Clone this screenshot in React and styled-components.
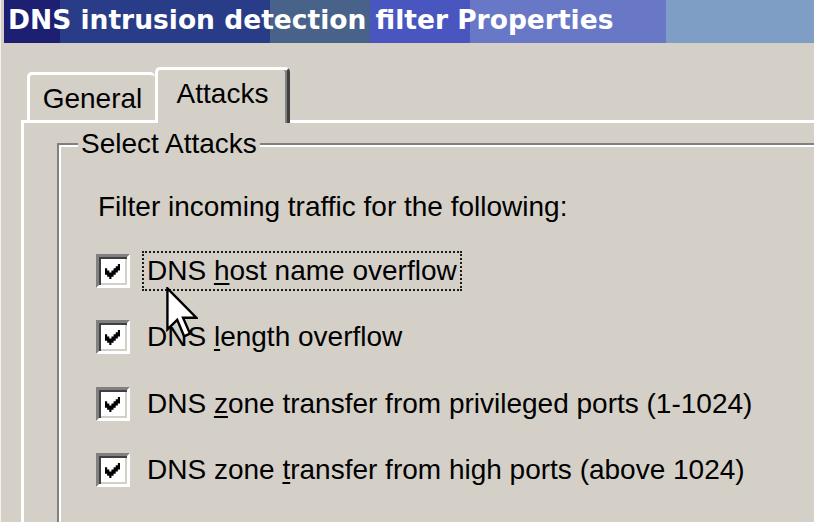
import React from "react";
import styled, { createGlobalStyle } from "styled-components";

const GlobalStyle = createGlobalStyle`
  html, body {
    margin: 0;
    padding: 0;
    background: #d4d0c8;
    overflow: hidden;
  }
  #root {
    width: 814px;
    height: 522px;
  }
`;

const Window = styled.div`
  position: relative;
  box-sizing: border-box;
  width: 814px;
  height: 522px;
  overflow: hidden;
  padding-left: 3px;
  border-left: 1px solid #f2f1ec;
  background: #d4d0c8;
  font-family: "Liberation Sans", Arial, sans-serif;
  color: #000;
`;

/* banded like a 256 colour capture of the win2k caption gradient */
const TitleBar = styled.div`
  height: 43px;
  line-height: 40px;
  padding-left: 4px;
  white-space: nowrap;
  font-family: "DejaVu Sans", Verdana, sans-serif;
  font-weight: bold;
  font-size: 26.5px;
  color: #fff;
  background: linear-gradient(
    90deg,
    #1c1f72 0,
    #1c1f72 56px,
    #283c88 56px,
    #283c88 266px,
    #48628a 266px,
    #48628a 366px,
    #4a56c0 366px,
    #4a56c0 466px,
    #6878c6 466px,
    #6878c6 662px,
    #7e9ec6 662px
  );
`;

const Body = styled.div`
  padding-left: 17px;
`;

const TabRow = styled.div`
  position: relative;
  z-index: 1;
  display: flex;
  align-items: flex-end;
  height: 56px;
  margin-top: 24px;
  margin-bottom: -3px;
  padding-left: 6px;
`;

const Tab = styled.div`
  box-sizing: border-box;
  width: ${(p) => p.$w}px;
  height: ${(p) => (p.$active ? 56 : 48)}px;
  margin-bottom: ${(p) => (p.$active ? 0 : 3)}px;
  padding-top: 8px;
  text-align: center;
  font-size: 28px;
  line-height: 32px;
  background: #d4d0c8;
  border-top: 3px solid #fff;
  border-left: 3px solid #fff;
  border-right: ${(p) => (p.$active ? "3px solid #404040" : "none")};
  border-radius: 5px 5px 0 0;
  box-shadow: ${(p) => (p.$active ? "inset -2px 0 0 #808080" : "none")};
`;

const Panel = styled.div`
  height: 420px;
  padding: 20px 0 0 33px;
  border-top: 3px solid #fff;
  border-left: 3px solid #fff;
`;

const GroupBox = styled.div`
  position: relative;
  height: 400px;
  padding: 46px 0 0 37px;
  border-top: 2px solid #808080;
  border-left: 2px solid #808080;
  box-shadow: inset 2px 2px 0 #fff;
`;

const Legend = styled.span`
  position: absolute;
  top: -17px;
  left: 19px;
  padding: 0 3px;
  font-size: 28px;
  line-height: 32px;
  background: #d4d0c8;
`;

const Intro = styled.div`
  margin-left: 2px;
  font-size: 28px;
  line-height: 32px;
`;

const Options = styled.div`
  display: flex;
  flex-direction: column;
  gap: 32.3px;
  margin-top: 31px;
`;

const Row = styled.div`
  display: flex;
  align-items: center;
  height: 34px;
`;

const Box = styled.div`
  box-sizing: border-box;
  flex: none;
  width: 34px;
  height: 34px;
  padding: 7px 0 0 6px;
  background: #fff;
  border: 3px solid;
  border-color: #808080 #fff #fff #808080;
  box-shadow: inset 2px 2px 0 #404040, inset -2px -2px 0 #d4d0c8;

  svg {
    display: block;
  }
`;

const Label = styled.span`
  margin-left: 12px;
  padding: 2px 3px;
  white-space: nowrap;
  font-size: 28px;
  line-height: 32px;
  border: 2px dotted ${(p) => (p.$focused ? "#1a1a1a" : "transparent")};

  u {
    text-decoration-thickness: 2px;
    text-underline-offset: 3px;
  }
`;

const Cursor = styled.svg`
  position: absolute;
  left: 165px;
  top: 287px;
`;

const Check = () => (
  <svg width="15" height="15" viewBox="0 0 7 7">
    <path
      d="M0 2h1v1h1v1h1v-1h1v-1h1v-1h1v-1h1v3h-1v1h-1v1h-1v1h-1v1h-1v-1h-1v-1h-1z"
      fill="#000"
    />
  </svg>
);

const attacks = [
  { pre: "DNS ", key: "h", post: "ost name overflow", focused: true },
  { pre: "DNS ", key: "l", post: "ength overflow" },
  { pre: "DNS ", key: "z", post: "one transfer from privileged ports (1-1024)" },
  { pre: "DNS zone ", key: "t", post: "ransfer from high ports (above 1024)" },
];

export default function App() {
  return (
    <>
      <GlobalStyle />
      <Window>
        <TitleBar>DNS intrusion detection filter Properties</TitleBar>
        <Body>
          <TabRow>
            <Tab $w={128}>General</Tab>
            <Tab $w={135} $active>
              Attacks
            </Tab>
          </TabRow>
          <Panel>
            <GroupBox>
              <Legend>Select Attacks</Legend>
              <Intro>Filter incoming traffic for the following:</Intro>
              <Options>
                {attacks.map((a) => (
                  <Row key={a.post}>
                    <Box>
                      <Check />
                    </Box>
                    <Label $focused={a.focused}>
                      {a.pre}
                      <u>{a.key}</u>
                      {a.post}
                    </Label>
                  </Row>
                ))}
              </Options>
            </GroupBox>
          </Panel>
        </Body>
        <Cursor width="32" height="53" viewBox="0 0 12 20">
          <polygon
            points="0.5,0.5 0.5,16 4.2,12.4 6.8,18.6 9,17.6 6.4,11.6 11.4,11.6"
            fill="#fff"
            stroke="#000"
            strokeWidth="0.9"
          />
        </Cursor>
      </Window>
    </>
  );
}
